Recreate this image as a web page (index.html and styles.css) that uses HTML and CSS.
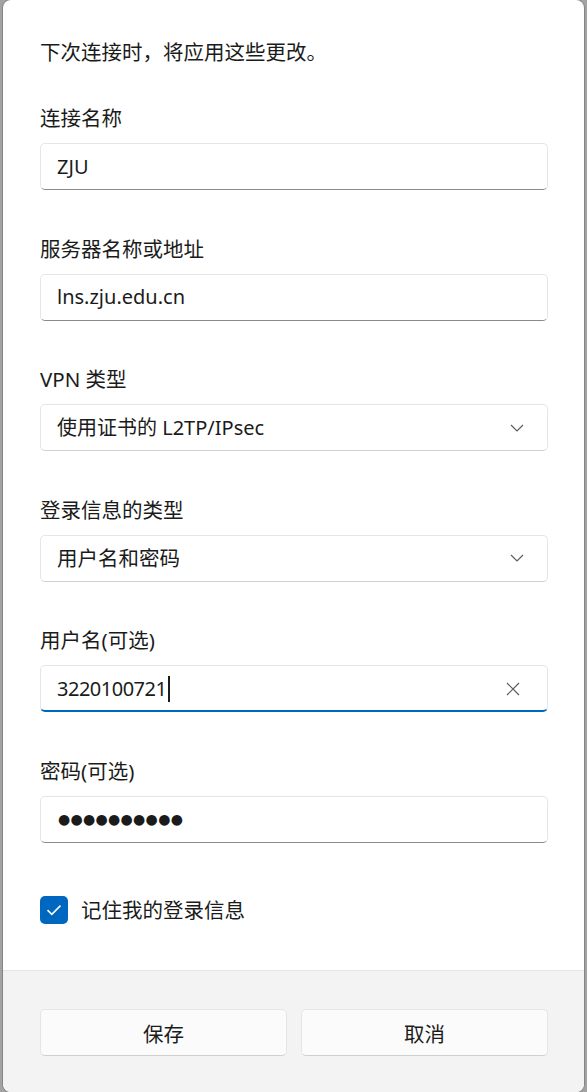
FILE: index.html
```html
<!DOCTYPE html>
<html lang="zh-CN">
<head>
<meta charset="utf-8">
<title>编辑 VPN 连接</title>
<link rel="stylesheet" href="styles.css">
</head>
<body>
<div class="dialog">
  <div class="content">
    <p class="intro">下次连接时，将应用这些更改。</p>

    <div class="field">
      <label class="label">连接名称</label>
      <div class="box"><span class="value">ZJU</span></div>
    </div>

    <div class="field">
      <label class="label">服务器名称或地址</label>
      <div class="box"><span class="value">lns.zju.edu.cn</span></div>
    </div>

    <div class="field">
      <label class="label">VPN 类型</label>
      <div class="box select">
        <span class="value">使用证书的 L2TP/IPsec</span>
        <svg class="chev" width="14" height="8" viewBox="0 0 14 8"><path d="M1 1 L7 7 L13 1" fill="none" stroke="#5d5d5d" stroke-width="1.2"/></svg>
      </div>
    </div>

    <div class="field">
      <label class="label">登录信息的类型</label>
      <div class="box select">
        <span class="value cjk">用户名和密码</span>
        <svg class="chev" width="14" height="8" viewBox="0 0 14 8"><path d="M1 1 L7 7 L13 1" fill="none" stroke="#5d5d5d" stroke-width="1.2"/></svg>
      </div>
    </div>

    <div class="field">
      <label class="label">用户名(可选)</label>
      <div class="box focused">
        <span class="value num">3220100721<span class="caret"></span></span>
        <svg class="clear" width="14" height="14" viewBox="0 0 14 14"><path d="M1 1 L13 13 M13 1 L1 13" fill="none" stroke="#5d5d5d" stroke-width="1.2"/></svg>
      </div>
    </div>

    <div class="field">
      <label class="label">密码(可选)</label>
      <div class="box"><span class="dots">●●●●●●●●●●</span></div>
    </div>

    <div class="check-row">
      <span class="checkbox">
        <svg width="16" height="12" viewBox="0 0 16 12"><path d="M1.5 6.2 L5.8 10.3 L14.5 1.6" fill="none" stroke="#fff" stroke-width="1.6"/></svg>
      </span>
      <span class="check-label">记住我的登录信息</span>
    </div>
  </div>

  <div class="footer">
    <button class="btn">保存</button>
    <button class="btn">取消</button>
  </div>
</div>
</body>
</html>
```

FILE: styles.css
```css
html, body {
  margin: 0;
  padding: 0;
}
body {
  background: #a3a3a3;
  width: 587px;
  height: 1092px;
  overflow: hidden;
  font-family: "Segoe UI", "Noto Sans", "Noto Sans CJK SC", sans-serif;
  color: #1b1b1b;
}
.dialog {
  margin-left: 3px;
  width: 581px;
  height: 1092px;
  background: #ffffff;
  border-radius: 8px;
  display: flex;
  flex-direction: column;
  overflow: hidden;
  box-shadow: 0 0 0 1px rgba(0,0,0,0.18);
}
.content {
  padding: 39px 36px 0 37px;
  display: flex;
  flex-direction: column;
  height: 970px;
  flex: none;
  box-sizing: border-box;
}
.intro {
  margin: 0 0 40px 0;
  font-size: 20.5px;
  line-height: 26px;
}
.field {
  display: flex;
  flex-direction: column;
  gap: 12px;
  margin-bottom: 45.6px;
}
.label {
  font-size: 20.5px;
  line-height: 26px;
}
.box {
  height: 47px;
  box-sizing: border-box;
  background: #ffffff;
  border: 1px solid #e6e6e6;
  border-bottom: 1px solid #8a8a8a;
  border-radius: 5px;
  display: flex;
  align-items: center;
  padding: 0 27px 0 16px;
  justify-content: space-between;
}
.box.select {
  border-bottom-color: #d0d0d0;
  padding-right: 23px;
}
.box.focused {
  border-bottom: 2px solid #0067c0;
  padding-top: 1px;
}
.value {
  font-size: 20px;
  line-height: 26px;
  display: flex;
  align-items: center;
}
.value.cjk {
  font-size: 20.5px;
}
.value.num {
  letter-spacing: -0.5px;
}
.caret {
  display: inline-block;
  width: 2px;
  height: 26px;
  background: #1b1b1b;
  margin-left: 1.5px;
}
.dots {
  font-family: "DejaVu Sans", sans-serif;
  font-size: 14px;
  letter-spacing: 0.3px;
  line-height: 24px;
  padding-left: 1px;
}
.chev {
  display: block;
}
.clear {
  display: block;
}
.check-row {
  margin-top: 7.4px;
  display: flex;
  align-items: center;
  gap: 13px;
}
.checkbox {
  width: 28px;
  height: 28px;
  border-radius: 5px;
  background: #0067c0;
  display: flex;
  align-items: center;
  justify-content: center;
}
.check-label {
  font-size: 20.5px;
  line-height: 26px;
}
.footer {
  flex: 1;
  background: #f3f3f3;
  border-top: 1px solid #e5e5e5;
  padding: 38px 36px 0 37px;
  display: flex;
  gap: 14px;
  align-items: flex-start;
}
.btn {
  flex: 1;
  height: 47px;
  background: #fbfbfb;
  border: 1px solid #e5e5e5;
  border-bottom-color: #cfcfcf;
  border-radius: 5px;
  font-family: "Segoe UI", "Noto Sans", "Noto Sans CJK SC", sans-serif;
  font-size: 20.5px;
  color: #1b1b1b;
  padding: 0;
}
```
